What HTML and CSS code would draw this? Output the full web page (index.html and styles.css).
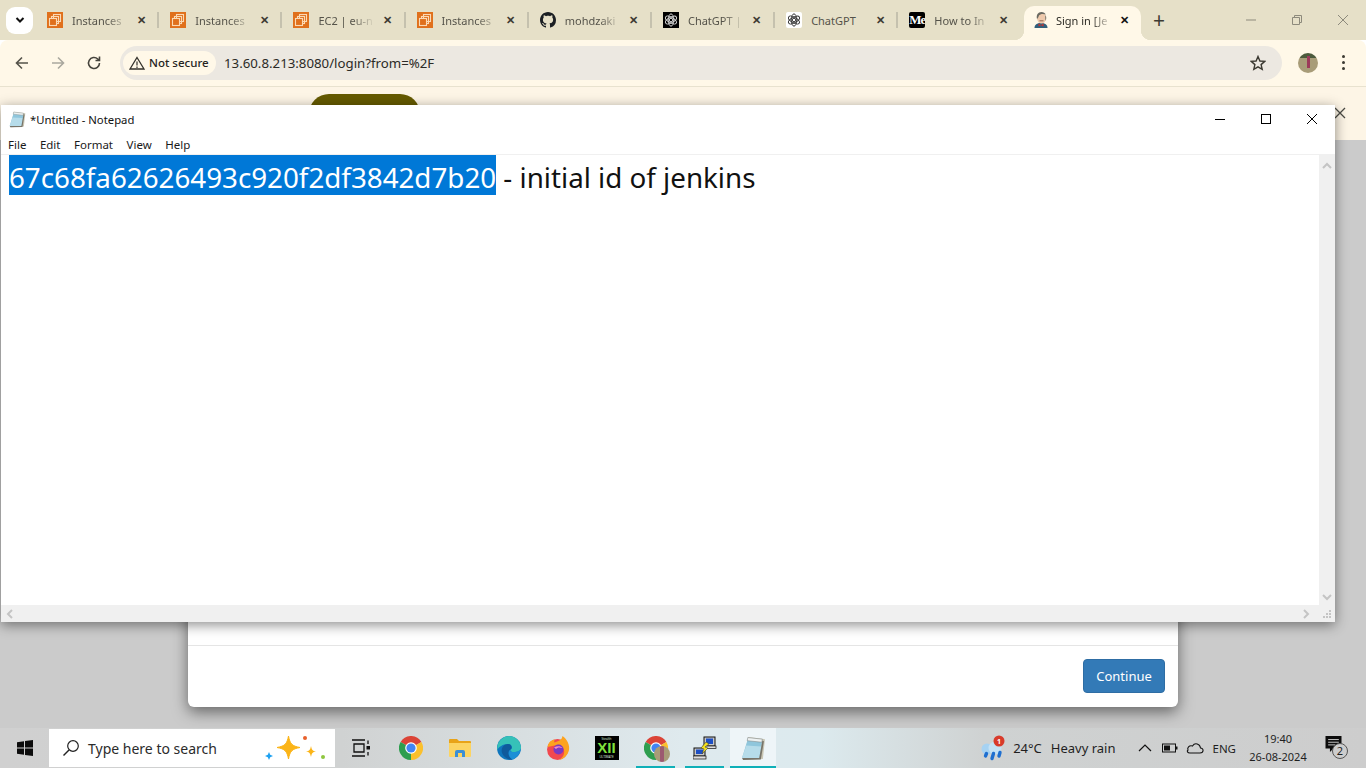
FILE: index.html
```html
<!DOCTYPE html>
<html lang="en">
<head>
    <meta charset="UTF-8">
    <title>Sign in [Jenkins]</title>
    <link rel="stylesheet" href="styles.css">
</head>
<body>
<svg class="defs" width="0" height="0">
    <defs>
        <symbol id="aws" viewBox="0 0 16 16">
            <rect width="16" height="16" fill="#e0701c"/>
            <rect x="6.500" y="2.500" width="7" height="7" fill="none" stroke="#fbd9b4" stroke-width="1.100"/>
            <rect x="4.500" y="4.500" width="7" height="7" fill="none" stroke="#fbd9b4" stroke-width="1.100"/>
            <rect x="2.500" y="6.500" width="7" height="7" fill="#e0701c" stroke="#fbd9b4" stroke-width="1.100"/>
        </symbol>
        <symbol id="knot" viewBox="0 0 16 16">
            <g fill="none" stroke="currentColor" stroke-width="1.100">
                <ellipse cx="8" cy="8" rx="3.200" ry="7"/>
                <ellipse cx="8" cy="8" rx="3.200" ry="7" transform="rotate(60 8 8)"/>
                <ellipse cx="8" cy="8" rx="3.200" ry="7" transform="rotate(120 8 8)"/>
                <circle cx="8" cy="8" r="2"/>
            </g>
        </symbol>
        <symbol id="chrome" viewBox="0 0 24 24">
            <path d="M12 12 1.600 6A12 12 0 0 1 22.400 6Z" fill="#db4437"/>
            <path d="M12 12 22.400 6A12 12 0 0 1 12 24Z" fill="#fbc02d"/>
            <path d="M12 12 12 24A12 12 0 0 1 1.600 6Z" fill="#2e9e4f"/>
            <circle cx="12" cy="12" r="5.800" fill="#fff"/>
            <circle cx="12" cy="12" r="4.600" fill="#4285f4"/>
        </symbol>
        <symbol id="notepad" viewBox="0 0 24 24">
            <path d="M7 1 23 3 21 22 2 23Z" fill="#c9c6b4"/>
            <path d="M6.500 3 20.500 4.500 17.500 21 1 21Z" fill="#8fc6dc"/>
            <path d="M5 9 19.500 10 17.500 21 1 21Z" fill="#b6dcea"/>
            <path d="M6.500 1.500 20.500 3 20 6 6 4.500Z" fill="#eef2f2" stroke="#77807f" stroke-width=".5"/>
            <path d="M1 21 17.500 21 20.500 4.500 22 5 19 22.500 2 23Z" fill="#77746a"/>
        </symbol>
    </defs>
</svg>

<div class="browser">
    <div class="tabstrip">
        <div class="tabsearch">
            <svg width="12" height="12" viewBox="0 0 12 12"><path d="M2.500 4 6 7.500 9.500 4" fill="none" stroke="#111" stroke-width="2"/></svg>
        </div>
        <div class="tab">
            <svg class="favicon"><use href="#aws"/></svg>
            <span class="tab-title">Instances</span>
            <span class="tab-close">&#10005;</span>
        </div>
        <div class="tab">
            <svg class="favicon"><use href="#aws"/></svg>
            <span class="tab-title">Instances</span>
            <span class="tab-close">&#10005;</span>
        </div>
        <div class="tab">
            <svg class="favicon"><use href="#aws"/></svg>
            <span class="tab-title">EC2 | eu-n</span>
            <span class="tab-close">&#10005;</span>
        </div>
        <div class="tab">
            <svg class="favicon"><use href="#aws"/></svg>
            <span class="tab-title">Instances</span>
            <span class="tab-close">&#10005;</span>
        </div>
        <div class="tab">
            <svg class="favicon" viewBox="0 0 16 16"><path fill="#1b1f23" d="M8 0C3.580 0 0 3.580 0 8c0 3.540 2.290 6.530 5.470 7.590.4.070.55-.17.55-.38 0-.19-.01-.82-.01-1.490-2.010.37-2.530-.49-2.690-.94-.09-.23-.48-.94-.82-1.130-.28-.15-.68-.52-.01-.53.63-.01 1.080.58 1.230.82.720 1.210 1.870.870 2.330.660.070-.520.280-.870.510-1.070-1.780-.200-3.640-.890-3.640-3.950 0-.870.310-1.590.820-2.150-.080-.200-.360-1.020.080-2.120 0 0 .670-.210 2.200.820.640-.180 1.320-.270 2-.270s1.360.090 2 .270c1.530-1.040 2.200-.820 2.200-.820.440 1.100.160 1.920.080 2.120.510.560.820 1.270.820 2.150 0 3.070-1.870 3.750-3.650 3.950.290.250.540.730.540 1.480 0 1.070-.010 1.930-.010 2.200 0 .210.150.460.550.380A8.010 8.010 0 0 0 16 8c0-4.420-3.580-8-8-8z"/></svg>
            <span class="tab-title">mohdzaki</span>
            <span class="tab-close">&#10005;</span>
        </div>
        <div class="tab">
            <span class="favicon gpt-dark"><svg width="14" height="14"><use href="#knot"/></svg></span>
            <span class="tab-title">ChatGPT |</span>
            <span class="tab-close">&#10005;</span>
        </div>
        <div class="tab">
            <span class="favicon gpt-light"><svg width="14" height="14"><use href="#knot"/></svg></span>
            <span class="tab-title tab-title-short">ChatGPT</span>
            <span class="tab-close">&#10005;</span>
        </div>
        <div class="tab tab-last">
            <span class="favicon medium">Me</span>
            <span class="tab-title">How to In</span>
            <span class="tab-close">&#10005;</span>
        </div>
        <div class="tab tab-active">
            <svg class="favicon" viewBox="0 0 16 16">
                <path d="M1.500 16C1.500 12.500 4 11 8 11s6.500 1.500 6.500 5Z" fill="#2f5f7c"/>
                <ellipse cx="8.500" cy="6" rx="4.500" ry="5.500" fill="#eec9ac"/>
                <path d="M4 7C3 3 5 0 8.500 0 10.500 0 12 1 12.800 2.500 10 1.500 7 2 6 3.500 5.500 5 5 6 4 7Z" fill="#6a6a62"/>
                <path d="M12.500 3C13.500 5 13.500 7 12.500 9 12.500 7 12 5 12.500 3Z" fill="#6a6a62"/>
                <path d="M5.500 11.500 8 13 10.500 11.500V14.500L8 13.300 5.500 14.500Z" fill="#c9302c"/>
                <path d="M6.500 8.800H10.500" stroke="#7a4a3a" stroke-width=".8"/>
            </svg>
            <span class="tab-title">Sign in [Je</span>
            <span class="tab-close">&#10005;</span>
        </div>
        <span class="newtab">+</span>
        <div class="winctl">
            <svg width="12" height="12" viewBox="0 0 12 12"><path d="M1 6H11" stroke="#8d8a7c"/></svg>
            <svg width="12" height="12" viewBox="0 0 12 12"><path d="M1.500 3.500H8.500V10.500H1.500ZM3.500 3.500V1.500H10.500V8.500H8.500" fill="none" stroke="#8d8a7c"/></svg>
            <svg width="12" height="12" viewBox="0 0 12 12"><path d="M1 1 11 11M11 1 1 11" stroke="#8d8a7c"/></svg>
        </div>
    </div>

    <div class="toolbar">
        <svg class="nav-icon" viewBox="0 0 16 16"><path d="M14 8H2.500M8 2.500 2.500 8 8 13.500" fill="none" stroke="#55534a" stroke-width="1.600"/></svg>
        <svg class="nav-icon" viewBox="0 0 16 16"><path d="M2 8H13.500M8 2.500 13.500 8 8 13.500" fill="none" stroke="#aaa89e" stroke-width="1.600"/></svg>
        <svg class="nav-icon" viewBox="0 0 16 16"><path d="M13.500 8A5.500 5.500 0 1 1 11.800 4L13.500 5.500M13.500 1.500V5.500H9.500" fill="none" stroke="#46443c" stroke-width="1.600"/></svg>
        <div class="omnibox">
            <div class="chip">
                <svg width="16" height="14" viewBox="0 0 16 14"><path d="M8 1.500 15 13H1Z" fill="none" stroke="#33312b" stroke-width="1.300"/><path d="M8 5.500V9.500M8 10.500V12" stroke="#33312b" stroke-width="1.200"/></svg>
                <span>Not secure</span>
            </div>
            <span class="url">13.60.8.213:8080/login?from=%2F</span>
            <svg class="star" width="16" height="16" viewBox="0 0 16 16"><path d="M8 1.500 9.900 6 14.800 6.400 11.100 9.600 12.200 14.400 8 11.900 3.800 14.400 4.900 9.600 1.200 6.400 6.100 6Z" fill="none" stroke="#3b3931" stroke-width="1.400"/></svg>
        </div>
        <div class="avatar"><span class="avatar-figure"></span></div>
        <div class="kebab"><i></i><i></i><i></i></div>
    </div>

    <div class="page">
        <div class="page-header">
            <div class="header-pill"></div>
            <svg class="header-close" width="12" height="12" viewBox="0 0 12 12"><path d="M1 1 11 11M11 1 1 11" stroke="#4a4a44" stroke-width="1.300"/></svg>
        </div>
        <div class="scrim">
            <div class="modal">
                <div class="modal-body"></div>
                <div class="modal-footer"><a class="btn-continue">Continue</a></div>
            </div>
        </div>
    </div>

    <div class="taskbar">
        <div class="start">
            <svg width="18" height="18" viewBox="0 0 18 18"><path d="M1 3.200 8 2.200V8.500H1ZM9 2 17 1V8.500H9ZM1 9.500H8V15.800L1 14.800ZM9 9.500H17V17L9 16Z" fill="#0c0c0c"/></svg>
        </div>
        <div class="searchbox">
            <svg width="18" height="18" viewBox="0 0 18 18"><circle cx="11" cy="7" r="5.300" fill="none" stroke="#222" stroke-width="1.200"/><path d="M7 11 1.500 16.500" stroke="#222" stroke-width="1.500"/></svg>
            <span class="search-text">Type here to search</span>
            <svg class="sparkles" width="62" height="30" viewBox="0 0 62 30">
                <path d="M23.500 3C25 11 27 13 35 14.500 27 16 25 18 23.500 26 22 18 20 16 12 14.500 20 13 22 11 23.500 3Z" fill="#fbb417" stroke="#fbb417" stroke-linejoin="round"/>
                <path d="M46 13C46.800 17 47.500 17.800 51 18.500 47.500 19.200 46.800 20 46 24 45.200 20 44.500 19.200 41 18.500 44.500 17.800 45.200 17 46 13Z" fill="#fbb417"/>
                <path d="M4 19 5.200 21.800 8 23 5.200 24.200 4 27 2.800 24.200 0 23 2.800 21.800Z" fill="#1ea1f1"/>
                <circle cx="40" cy="5" r="2" fill="#e8602c"/>
                <circle cx="58" cy="24" r="2" fill="#8ec63f"/>
            </svg>
        </div>
        <div class="cell cell-first">
            <svg width="20" height="18" viewBox="0 0 20 18"><path d="M1 1H14M1 17H14M3 5H13V13H3Z" fill="none" stroke="#111" stroke-width="1.300"/><path d="M17 1.500V5M17 13V16.500" stroke="#111" stroke-width="1.300"/><rect x="15.500" y="7" width="3.500" height="3.500" fill="#111"/></svg>
        </div>
        <div class="cell"><svg width="24" height="24"><use href="#chrome"/></svg></div>
        <div class="cell">
            <svg width="22" height="20" viewBox="0 0 22 20"><path d="M0 2Q0 1 1 1H8L10 3H21Q22 3 22 4V6H0Z" fill="#e8a318"/><path d="M0 5H22V18Q22 19 21 19H1Q0 19 0 18Z" fill="#fcd462"/><path d="M6 19V14Q6 12 8 12H14Q16 12 16 14V19H13V15H9V19Z" fill="#3b8fd6"/></svg>
        </div>
        <div class="cell">
            <svg width="24" height="24" viewBox="0 0 24 24">
                <circle cx="12" cy="12" r="12" fill="#0f76bd"/>
                <path d="M.300 10C2 3 8 0 12 0 19 0 24 6 24 11.500 24 15 20.500 16 17 16 14 16 13 15 13.500 13.500 16 13 15.500 8 11 8 6 8 1.500 11 .300 14Z" fill="#36c1b8"/>
                <path d="M11 8C7 8 3.500 12 5 17 6.500 21 11 24 15.500 23.600 11.500 21 9.500 16 13.500 13.500 15.500 12 14.500 8 11 8Z" fill="#0f5a9c"/>
                <path d="M13.500 13.500C12.700 15 13.500 16 17 16 19 16 22.500 15.500 23.800 13 23 18 19.500 22 15.500 23.600 11.500 21 10.500 16 13.500 13.500Z" fill="#1b8fd6"/>
            </svg>
        </div>
        <div class="cell">
            <svg width="24" height="24" viewBox="0 0 24 24">
                <circle cx="11.500" cy="13.500" r="10.500" fill="#f2484f"/>
                <path d="M1.500 11C2.500 6 5.500 4 9 3.500 8 5 8 6 8.500 6.500 12 5 15.500 5 16.500 0 21 3 24 9 23 14 22 19 18 23 13 24 16 22 19 19 18 14 17 10 14 8 11 9Z" fill="#fda31f"/>
                <circle cx="12.500" cy="13.500" r="5" fill="#7a3ac2"/>
                <path d="M8 11.500C11 9.500 15 10 16.500 12 13.500 11 11 11.500 10 13Z" fill="#f58ac8"/>
            </svg>
        </div>
        <div class="cell">
            <div class="xii">
                <span class="xii-small">Stealth</span>
                <span class="xii-main">XII</span>
                <span class="xii-small">ULTIMATE</span>
            </div>
        </div>
        <div class="cell cell-open">
            <svg width="24" height="24"><use href="#chrome"/></svg>
            <span class="chrome-avatar"></span>
        </div>
        <div class="cell cell-open">
            <svg width="24" height="24" viewBox="0 0 24 24">
                <rect x="11" y="1" width="11" height="9" fill="#c8c8c8" stroke="#111"/>
                <rect x="13" y="2.500" width="7" height="5.500" fill="#1d4fc4"/>
                <rect x="10" y="10" width="13" height="2.500" fill="#ddd" stroke="#111" stroke-width=".7"/>
                <rect x="1" y="12" width="11" height="8" fill="#c8c8c8" stroke="#111"/>
                <rect x="3" y="13.500" width="7" height="4.500" fill="#1d4fc4"/>
                <rect x="0" y="20" width="13" height="3" fill="#ddd" stroke="#111" stroke-width=".7"/>
                <path d="M13 6 16 8 12 11 15 12 9 18 11 13 8 12Z" fill="#f5e11c" stroke="#333" stroke-width=".5"/>
            </svg>
        </div>
        <div class="cell cell-open cell-active"><svg width="25" height="25"><use href="#notepad"/></svg></div>

        <div class="tray">
            <div class="weather">
                <svg width="26" height="26" viewBox="0 0 26 26">
                    <circle cx="7" cy="14" r="5.500" fill="#a6d2f2"/>
                    <circle cx="15" cy="13" r="6.500" fill="#c4e2f6"/>
                    <path d="M6.500 18.500 5.500 21M13.500 18.500 12 23.500M20 17.500 19 21" stroke="#1e6fd0" stroke-width="3.400" stroke-linecap="round"/>
                    <circle cx="19" cy="6" r="5.500" fill="#d83b2b"/>
                    <text x="19" y="8.500" class="badge-num">1</text>
                </svg>
                <span class="temp">24°C</span>
                <span class="forecast">Heavy rain</span>
            </div>
            <svg class="tray-caret" width="14" height="8" viewBox="0 0 14 8"><path d="M1 7 7 1 13 7" fill="none" stroke="#111" stroke-width="1.200"/></svg>
            <svg class="tray-battery" width="16" height="10" viewBox="0 0 16 10"><rect x=".500" y="1" width="13" height="8" fill="none" stroke="#111"/><rect x="2" y="2.500" width="6" height="5" fill="#111"/><rect x="14" y="3.500" width="1.500" height="3" fill="#111"/></svg>
            <svg class="tray-cloud" width="18" height="12" viewBox="0 0 18 12"><path d="M4 11H14C18 11 18 6 14.500 6 14 2 9 0 6.500 4 3 3 1 6 2 8 .5 9 1.500 11 4 11Z" fill="none" stroke="#111" stroke-width="1.100"/></svg>
            <span class="lang">ENG</span>
            <div class="clock">
                <span>19:40</span>
                <span>26-08-2024</span>
            </div>
            <div class="notif">
                <svg width="17" height="16" viewBox="0 0 18 18"><path d="M0 0H18V14H9L5 18V14H0Z" fill="#0c0c0c"/><path d="M3 4H15M3 7H15M3 10H11" stroke="#dcdcdc"/></svg>
                <span class="notif-count">2</span>
            </div>
        </div>
    </div>
</div>

<div class="notepad">
    <div class="np-title">
        <svg width="17" height="17"><use href="#notepad"/></svg>
        <span class="np-name">*Untitled - Notepad</span>
        <div class="np-ctl">
            <svg width="12" height="12" viewBox="0 0 12 12"><path d="M1 6.500H11" stroke="#000"/></svg>
            <svg width="12" height="12" viewBox="0 0 12 12"><rect x="1.500" y="1.500" width="9" height="9" fill="none" stroke="#000"/></svg>
            <svg width="12" height="12" viewBox="0 0 12 12"><path d="M1 1 11 11M11 1 1 11" stroke="#000"/></svg>
        </div>
    </div>
    <ul class="np-menu">
        <li>File</li>
        <li>Edit</li>
        <li>Format</li>
        <li>View</li>
        <li>Help</li>
    </ul>
    <div class="np-main">
        <div class="np-text"><span class="np-selected">67c68fa62626493c920f2df3842d7b20</span> - initial id of jenkins</div>
        <div class="np-vscroll">
            <svg width="10" height="7" viewBox="0 0 10 7"><path d="M1 6 5 2 9 6" fill="none" stroke="#c4c4c4" stroke-width="2"/></svg>
            <svg width="10" height="7" viewBox="0 0 10 7"><path d="M1 1 5 5 9 1" fill="none" stroke="#c4c4c4" stroke-width="2"/></svg>
        </div>
    </div>
    <div class="np-hscroll">
        <svg width="7" height="10" viewBox="0 0 7 10"><path d="M6 1 2 5 6 9" fill="none" stroke="#c4c4c4" stroke-width="2"/></svg>
        <svg width="7" height="10" viewBox="0 0 7 10"><path d="M1 1 5 5 1 9" fill="none" stroke="#c4c4c4" stroke-width="2"/></svg>
        <svg class="np-grip" width="10" height="10" viewBox="0 0 10 10"><path d="M7 1H9V3H7ZM4 4H6V6H4ZM7 4H9V6H7ZM1 7H3V9H1ZM4 7H6V9H4ZM7 7H9V9H7Z" fill="#c4c4c4"/></svg>
    </div>
</div>
</body>
</html>
```

FILE: styles.css
```css
* {
    margin: 0;
    padding: 0;
    box-sizing: border-box;
}

html, body {
    width: 1366px;
    height: 768px;
    overflow: hidden;
}

body {
    position: relative;
    font-family: "Noto Sans", "Open Sans", sans-serif;
    color: #1a1a1a;
}

ul {
    list-style: none;
}

.defs {
    display: block;
    height: 0;
}

.browser {
    display: flex;
    flex-direction: column;
    height: 768px;
}

/* tabs */
.tabstrip {
    display: flex;
    align-items: center;
    height: 40px;
    padding-left: 6px;
    background: #e6e0c8;
}

.tabsearch {
    display: flex;
    align-items: center;
    justify-content: center;
    width: 27px;
    height: 27px;
    margin-right: 3px;
    border-radius: 9px;
    background: #fff;
}

.tab {
    display: flex;
    align-items: center;
    width: 123.200px;
    height: 40px;
    padding-left: 11px;
    font-size: 11px;
    color: #55534a;
    position: relative;
}

.tab::after {
    content: "";
    position: absolute;
    right: 0;
    top: 12px;
    width: 2px;
    height: 16px;
    background: #c5c1ae;
}

.tab-last::after {
    display: none;
}

.favicon {
    flex: none;
    display: flex;
    align-items: center;
    justify-content: center;
    width: 16px;
    height: 16px;
    overflow: hidden;
}

.gpt-dark {
    background: #000;
    color: #d8d8d8;
}

.gpt-light {
    background: #fff;
    border-radius: 2px;
    color: #333;
}

.medium {
    justify-content: flex-start;
    border-radius: 2px;
    background: #000;
    color: #fff;
    font-family: "Liberation Serif", serif;
    font-size: 13px;
    font-weight: 700;
    white-space: nowrap;
    letter-spacing: -1px;
}

.tab-title {
    width: 58px;
    margin-left: 9px;
    white-space: nowrap;
    overflow: hidden;
    -webkit-mask-image: linear-gradient(to right, #000 60%, rgba(0, 0, 0, .15) 92%);
    mask-image: linear-gradient(to right, #000 60%, rgba(0, 0, 0, .15) 92%);
}

.tab-title-short {
    -webkit-mask-image: none;
    mask-image: none;
}

.tab-close {
    width: 16px;
    margin-left: 3px;
    font-size: 11px;
    font-weight: 700;
    line-height: 16px;
    text-align: center;
    color: #3c3a32;
}

.tab-active {
    width: 117px;
    height: 34px;
    margin-left: 2.400px;
    padding: 0 0 6px 9px;
    align-self: flex-end;
    background: #fff8e8;
    border-radius: 10px 10px 0 0;
    color: #2c2a24;
}

.tab-active::before,
.tab-active::after {
    content: "";
    position: absolute;
    top: auto;
    bottom: 0;
    width: 10px;
    height: 10px;
    background: radial-gradient(circle at 0 0, transparent 10px, #fff8e8 10.500px);
}

.tab-active::before {
    left: -10px;
}

.tab-active::after {
    right: -10px;
    background: radial-gradient(circle at 100% 0, transparent 10px, #fff8e8 10.500px);
}

.tab-active .tab-title {
    margin-left: 7px;
    width: 58px;
}

.tab-active .tab-close {
    margin-left: 3px;
    color: #111;
}

.newtab {
    margin-left: 12px;
    font-size: 21px;
    line-height: 22px;
    color: #3c3a32;
}

.winctl {
    display: flex;
    gap: 34px;
    margin-left: auto;
    padding-right: 17px;
}

/* toolbar */
.toolbar {
    display: flex;
    align-items: center;
    height: 47px;
    padding: 0 0 1px 14px;
    background: #fff8e8;
    border-bottom: 1px solid #e8e2cf;
    border-radius: 8px 8px 0 0;
}

.nav-icon {
    width: 16px;
    height: 16px;
    margin-right: 20px;
}

.omnibox {
    display: flex;
    align-items: center;
    width: 1162px;
    height: 34px;
    margin-left: -2px;
    padding: 0 16px 0 3px;
    border-radius: 17px;
    background: #ece8e1;
}

.chip {
    display: flex;
    align-items: center;
    gap: 4px;
    height: 24px;
    width: 93px;
    padding-left: 6px;
    border-radius: 12px;
    background: #fff8e8;
    font-size: 11.500px;
    font-weight: 500;
    color: #26241f;
    white-space: nowrap;
}

.url {
    margin-left: 8px;
    font-size: 13.250px;
    color: #2b2a26;
}

.star {
    margin-left: auto;
}

.avatar {
    width: 20px;
    height: 20px;
    margin-left: 16px;
    border-radius: 50%;
    background: linear-gradient(#4c5a3c 0 25%, #a89c78 25% 100%);
    display: flex;
    justify-content: center;
}

.avatar-figure {
    width: 3px;
    height: 12px;
    margin-top: 3px;
    background: #9c3a5a;
}

.kebab {
    display: flex;
    flex-direction: column;
    gap: 3px;
    margin-left: 24px;
}

.kebab i {
    display: block;
    width: 3px;
    height: 3px;
    border-radius: 50%;
    background: #3c3a32;
}

/* page behind notepad */
.page {
    flex: 1;
    display: flex;
    flex-direction: column;
}

.page-header {
    position: relative;
    flex: none;
    height: 53px;
    background: #fdf5e6;
    overflow: hidden;
}

.header-pill {
    width: 111px;
    height: 40px;
    margin: 7px 0 0 309px;
    border-radius: 20px;
    background: #655a00;
}

.header-close {
    position: absolute;
    left: 1334px;
    top: 20px;
}

.scrim {
    position: relative;
    flex: 1;
    background: #cbcbcb;
}

.modal {
    position: absolute;
    left: 188px;
    bottom: 21px;
    width: 990px;
    height: 200px;
    display: flex;
    flex-direction: column;
    justify-content: flex-end;
    border-radius: 0 0 6px 6px;
    background: #fff;
    box-shadow: 0 5px 15px rgba(0, 0, 0, .5);
}

.modal-footer {
    display: flex;
    justify-content: flex-end;
    align-items: flex-start;
    height: 62px;
    padding: 13px 13px 0 0;
    border-top: 1px solid #e5e5e5;
}

.btn-continue {
    display: block;
    width: 82px;
    height: 34px;
    border: 1px solid #2e6da4;
    border-radius: 4px;
    background: #337ab7;
    color: #fff;
    font-size: 13px;
    line-height: 32px;
    text-align: center;
}

/* taskbar */
.taskbar {
    display: flex;
    align-items: center;
    flex: none;
    height: 40px;
    background: linear-gradient(to right, #d0d0d0 0, #d0d2d2 25%, #dfeaee 50%, #dceaee 60%, #cfd2d2 72%, #cdcdcd 100%);
}

.start {
    display: flex;
    align-items: center;
    justify-content: center;
    width: 49px;
    height: 40px;
}

.searchbox {
    display: flex;
    align-items: center;
    width: 286px;
    height: 38px;
    padding-left: 13px;
    background: #fff;
}

.search-text {
    margin-left: 8px;
    font-size: 14px;
    color: #2b2b2b;
}

.sparkles {
    margin-left: auto;
    margin-right: 8px;
}

.cell {
    position: relative;
    display: flex;
    align-items: center;
    justify-content: center;
    width: 49px;
    height: 40px;
}

.cell-first {
    width: 51px;
}

.cell-open::after {
    content: "";
    position: absolute;
    left: 5px;
    right: 5px;
    bottom: 0;
    height: 2px;
    background: #0fb0b8;
}

.cell-active {
    width: 46px;
    margin-left: 1px;
    background: #eef5f8;
}

.cell-active::after {
    left: 0;
    right: 0;
}

.chrome-avatar {
    position: absolute;
    left: 23px;
    top: 18px;
    width: 16px;
    height: 16px;
    border-radius: 50%;
    background: linear-gradient(to right, #a89c78 40%, #9c5a70 40% 60%, #a89c78 60%);
}

.xii {
    display: flex;
    flex-direction: column;
    align-items: center;
    justify-content: center;
    width: 24px;
    height: 24px;
    background: #000;
    color: #d8e8d8;
}

.xii-small {
    font-size: 3px;
    line-height: 4px;
    white-space: nowrap;
}

.xii-main {
    font-family: "Liberation Sans", sans-serif;
    font-size: 15px;
    font-weight: 700;
    line-height: 14px;
    color: #7fe03c;
}

.tray {
    display: flex;
    align-items: center;
    margin-left: auto;
    height: 40px;
    font-size: 12px;
    color: #1f1f1f;
}

.weather {
    display: flex;
    align-items: center;
    font-size: 13px;
}

.badge-num {
    font-family: "Noto Sans", sans-serif;
    font-size: 7px;
    font-weight: 700;
    fill: #fff;
    text-anchor: middle;
}

.temp {
    margin-left: 7px;
}

.forecast {
    margin-left: 9px;
}

.tray-caret {
    margin-left: 23px;
}

.tray-battery {
    margin-left: 10px;
}

.tray-cloud {
    margin-left: 8px;
}

.lang {
    margin-left: 8px;
    font-size: 11.500px;
}

.clock {
    display: flex;
    flex-direction: column;
    align-items: center;
    width: 72px;
    margin-left: 6px;
    font-size: 11px;
    line-height: 18px;
}

.notif {
    position: relative;
    width: 24px;
    height: 24px;
    margin: 0 17px 0 11px;
}

.notif-count {
    position: absolute;
    left: 7px;
    top: 7px;
    width: 16px;
    height: 16px;
    border: 1px solid #555;
    border-radius: 50%;
    background: #cdcdcd;
    font-size: 11px;
    line-height: 14px;
    text-align: center;
}

/* notepad window */
.notepad {
    position: absolute;
    left: 1px;
    top: 105px;
    width: 1334px;
    height: 517px;
    display: flex;
    flex-direction: column;
    background: #fff;
    box-shadow: 0 3px 12px rgba(0, 0, 0, .45);
}

.np-title {
    display: flex;
    align-items: center;
    flex: none;
    height: 28px;
    padding-left: 8px;
    font-size: 11.300px;
    color: #111;
}

.np-name {
    margin-left: 4px;
}

.np-ctl {
    display: flex;
    gap: 34px;
    margin-left: auto;
    padding-right: 17px;
}

.np-menu {
    display: flex;
    flex: none;
    height: 22px;
    padding: 4px 0 0 7px;
    gap: 13.500px;
    font-size: 11.500px;
    border-bottom: 1px solid #f0f0f0;
}

.np-main {
    display: flex;
    flex: 1;
}

.np-text {
    flex: 1;
    padding-left: 8px;
    font-size: 27.750px;
    line-height: 44px;
    white-space: nowrap;
    color: #111;
}

.np-selected {
    display: inline-block;
    height: 40px;
    background: #0078d7;
    color: #fff;
}

.np-vscroll {
    display: flex;
    flex-direction: column;
    justify-content: space-between;
    align-items: center;
    flex: none;
    width: 16px;
    padding: 7px 0 4px;
    background: #f0f0f0;
}

.np-hscroll {
    display: flex;
    align-items: center;
    flex: none;
    height: 17px;
    padding: 0 3px 0 5px;
    background: #f0f0f0;
}

.np-grip {
    margin-left: 12px;
}

.np-hscroll svg:nth-child(2) {
    margin-left: auto;
}
```
